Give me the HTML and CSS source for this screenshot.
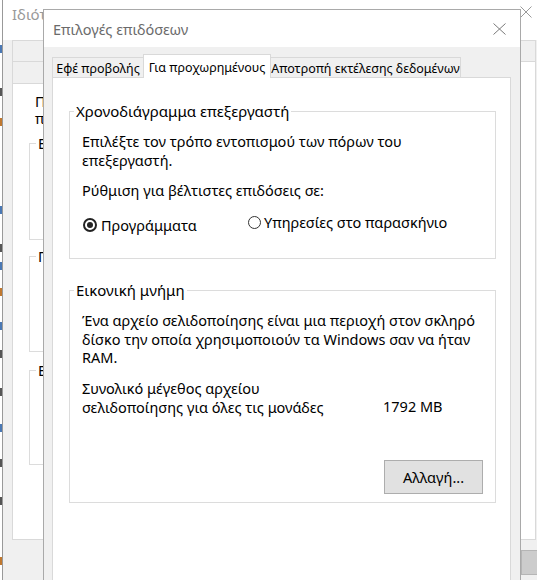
FILE: index.html
```html
<!DOCTYPE html>
<html lang="el">
<head>
<meta charset="utf-8">
<title>Επιλογές επιδόσεων</title>
<link rel="stylesheet" href="styles.css">
</head>
<body>
<div class="edge">
  <i class="e1 blue"></i><i class="e2 dark"></i><i class="e3 brown"></i><i class="e4 blue"></i><i class="e5 dark"></i><i class="e6 blue"></i><i class="e7 brown"></i><i class="e8 blue"></i><i class="e9 dark"></i><i class="e10 dark"></i><i class="e11 blue"></i><i class="e12 dark"></i><i class="e13 dark"></i><i class="e14 brown"></i>
</div>

<div class="bgwin">
  <div class="bg-title">
    <span>Ιδιότητες συστήματος</span>
    <span class="bg-close"><svg width="12" height="12" viewBox="0 0 12 12"><path d="M0.5 0.5L11.5 11.5M11.5 0.5L0.5 11.5" stroke="#9a9a9a" stroke-width="1" fill="none"/></svg></span>
  </div>
  <div class="bg-tabs">
    <div class="bg-row">
      <div class="bg-tab"></div>
      <div class="bg-tab"></div>
    </div>
    <div class="bg-row">
      <div class="bg-tab"></div>
      <div class="bg-tab"></div>
      <div class="bg-tab sel"></div>
    </div>
  </div>
  <div class="bg-panel">
    <p class="bg-note">Πρέπει να έχετε συνδεθεί ως διαχειριστής<br>περισσότερες από αυτές τις αλλαγές.</p>
    <fieldset class="bg-group"><legend>Επιδόσεις</legend><div class="bg-inner h1"></div></fieldset>
    <fieldset class="bg-group g2"><legend>Προφίλ χρήστη</legend><div class="bg-inner h2"></div></fieldset>
    <fieldset class="bg-group g3"><legend>Εκκίνηση και αποκατάσταση</legend><div class="bg-inner h3"></div></fieldset>
  </div>
  <div class="bg-buttons"><span class="bg-btn"></span></div>
</div>

<div class="dialog">
  <div class="dlg-title">
    <span>Επιλογές επιδόσεων</span>
    <span class="dlg-close"><svg width="13" height="12" viewBox="0 0 13 12"><path d="M0.5 0.5L12.5 11.5M12.5 0.5L0.5 11.5" stroke="#7a7a7a" stroke-width="1" fill="none"/></svg></span>
  </div>
  <div class="dlg-body">
    <div class="tabs">
      <div class="tab t1">Εφέ προβολής</div>
      <div class="tab t2 sel">Για προχωρημένους</div>
      <div class="tab t3">Αποτροπή εκτέλεσης δεδομένων</div>
    </div>
    <div class="panel">
      <fieldset class="group g-cpu">
        <legend>Χρονοδιάγραμμα επεξεργαστή</legend>
        <p class="txt">Επιλέξτε τον τρόπο εντοπισμού των πόρων του<br>επεξεργαστή.</p>
        <p class="txt opt-title">Ρύθμιση για βέλτιστες επιδόσεις σε:</p>
        <div class="radios">
          <label class="radio-opt first"><span class="radio checked"></span>Προγράμματα</label>
          <label class="radio-opt second"><span class="radio"></span>Υπηρεσίες στο παρασκήνιο</label>
        </div>
      </fieldset>
      <fieldset class="group g-mem">
        <legend>Εικονική μνήμη</legend>
        <p class="txt mem">Ένα αρχείο σελιδοποίησης είναι μια περιοχή στον σκληρό<br>δίσκο την οποία χρησιμοποιούν τα Windows σαν να ήταν<br>RAM.</p>
        <div class="size-row">
          <p class="txt size-label">Συνολικό μέγεθος αρχείου<br>σελιδοποίησης για όλες τις μονάδες</p>
          <p class="txt size-value">1792 MB</p>
        </div>
        <div class="btn-row"><button class="btn" type="button">Αλλαγή...</button></div>
      </fieldset>
    </div>
  </div>
</div>
</body>
</html>
```
FILE: styles.css
```css
* { box-sizing: border-box; }
html, body { margin: 0; padding: 0; }
body {
  width: 537px;
  height: 580px;
  overflow: hidden;
  position: relative;
  background: #ffffff;
  font-family: "Noto Sans", "Open Sans", sans-serif;
  font-size: 14.5px;
  color: #000;
}

/* strip of a window further behind */
.edge {
  position: absolute;
  left: 0; top: 0;
  width: 2px; height: 580px;
  display: flex;
  flex-direction: column;
}
.edge i { display: block; width: 2px; height: 8px; }
.edge .blue { background: #4a78b4; }
.edge .dark { background: #555; }
.edge .brown { background: #c0782f; }
.e1 { margin-top: 45px; }
.e2 { margin-top: 35px; }
.e3 { margin-top: 22px; }
.e4 { margin-top: 80px; }
.e5 { margin-top: 30px; }
.e6 { margin-top: 10px; }
.e7 { margin-top: 18px; }
.e8 { margin-top: 26px; }
.e9 { margin-top: 20px; }
.e10 { margin-top: 30px; }
.e11 { margin-top: 28px; }
.e12 { margin-top: 27px; }
.e13 { margin-top: 30px; }
.e14 { margin-top: 52px; }

/* background window: System properties */
.bgwin {
  position: absolute;
  z-index: 0;
  left: 2px; top: 0;
  width: 543px; height: 600px;
  background: #f0f0f0;
  border-left: 1px solid #999;
  display: flex;
  flex-direction: column;
}
.bg-title {
  height: 40px;
  flex: none;
  background: #fff;
  padding: 4px 0 0 9px;
  display: flex;
  justify-content: space-between;
  align-items: flex-start;
  color: #999;
  font-size: 15px;
  line-height: 20px;
}
.bg-close {
  width: 38px; height: 15px;
  display: flex; align-items: center; justify-content: center;
}
.bg-tabs { padding: 0 9px; flex: none; }
.bg-row { display: flex; height: 21px; }
.bg-row + .bg-row { height: 22px; }
.bg-tab {
  flex: 1;
  border: 1px solid #d9d9d9;
  border-bottom: 0;
  background: #f0f0f0;
}
.bg-tab.sel { background: #fff; margin-bottom: -1px; position: relative; }
.bg-panel {
  height: 457px;
  flex: none;
  margin: 0 9px;
  background: #fff;
  border: 1px solid #d9d9d9;
  padding: 9px 0 0 16px;
}
.bg-note { margin: 0; padding-left: 6px; line-height: 17px; white-space: nowrap; }
.bg-group {
  margin: 7px 0 0 0;
  padding: 0 0 0 6px;
  border: 1px solid #dcdcdc;
  width: 480px;
}
.bg-group legend { padding: 0 2px; line-height: 18px; }
.bg-group.g2 { margin-top: 7px; }
.bg-group.g3 { margin-top: 9px; }
.bg-inner.h1 { height: 87px; }
.bg-inner.h2 { height: 86px; }
.bg-inner.h3 { height: 85px; }
.bg-buttons { padding: 10px 0 0 518px; }
.bg-btn {
  display: block;
  width: 80px; height: 25px;
  background: #cccccc;
  border: 1px solid #b5b5b5;
}

/* foreground dialog */
.dialog {
  position: absolute;
  z-index: 1;
  left: 43px; top: 9px;
  width: 478px; height: 600px;
  border: 1px solid #a9a9a9;
  background: #f0f0f0;
  display: flex;
  flex-direction: column;
}
.dlg-title {
  height: 37px;
  flex: none;
  background: #fff;
  display: flex;
  align-items: center;
  justify-content: space-between;
  padding-left: 9px;
  font-size: 14.5px;
  color: #6b6b6b;
}
.dlg-close {
  width: 41px; height: 37px;
  display: flex; align-items: center; justify-content: center;
}
.dlg-body {
  flex: 1;
  padding: 7px 9px 0 8px;
  display: flex;
  flex-direction: column;
}
.tabs { display: flex; align-items: flex-end; height: 23px; flex: none; }
.tab {
  flex: none;
  height: 20px;
  border: 1px solid #d9d9d9;
  border-bottom: 0;
  background: #f0f0f0;
  font-size: 12.5px;
  line-height: 19px;
  padding-top: 1px;
  text-align: center;
  white-space: nowrap;
}
.tab.t1 { width: 92px; }
.tab.t2 { width: 128px; margin-left: -1px; }
.tab.t3 { width: 191px; margin-left: -1px; }
.tab.sel {
  height: 24px;
  padding-top: 3px;
  background: #fff;
  margin-bottom: -1px;
  position: relative;
  z-index: 1;
}
.panel {
  flex: 1;
  background: #fff;
  border: 1px solid #d9d9d9;
  padding: 24px 14px 0 16px;
}

.group {
  margin: 0;
  min-width: 0;
  border: 1px solid #dcdcdc;
  padding: 12px 12px 23px 12px;
}
.group legend {
  padding: 0 2px;
  margin-left: -8px;
  font-size: 15px;
  line-height: 18px;
}
.g-mem { margin-top: 22px; padding-bottom: 8px; }

.txt { margin: 0; line-height: 19px; white-space: nowrap; }
.txt.mem { line-height: 18.5px; }
.opt-title { margin-top: 11px; }

.radios { display: flex; align-items: flex-start; margin-top: 16px; height: 19px; }
.radio-opt { display: flex; align-items: center; line-height: 19px; white-space: nowrap; }
.radio-opt.first { width: 166px; gap: 4px; padding-left: 1px; }
.radio-opt.second { gap: 3px; margin-top: -3px; }
.radio {
  flex: none;
  width: 13px; height: 13px;
  border: 1px solid #333;
  border-radius: 50%;
  background: #fff;
}
.radio.checked {
  width: 14px; height: 14px;
  border: 2px solid #222;
  margin-bottom: 1px;
  display: flex; align-items: center; justify-content: center;
}
.radio.checked::after {
  content: "";
  width: 6px; height: 6px;
  border-radius: 50%;
  background: #222;
}

.size-row { display: flex; align-items: flex-start; margin-top: 12px; height: 38px; }
.size-label { width: 301px; }
.size-value { padding-top: 18px; }

.btn-row { display: flex; justify-content: flex-end; margin-top: 43px; }
.btn {
  width: 99px; height: 34px;
  background: #e1e1e1;
  border: 1px solid #adadad;
  border-radius: 0;
  font-family: "Noto Sans", "Open Sans", sans-serif;
  font-size: 14.5px;
  color: #000;
  padding: 0;
}
```
